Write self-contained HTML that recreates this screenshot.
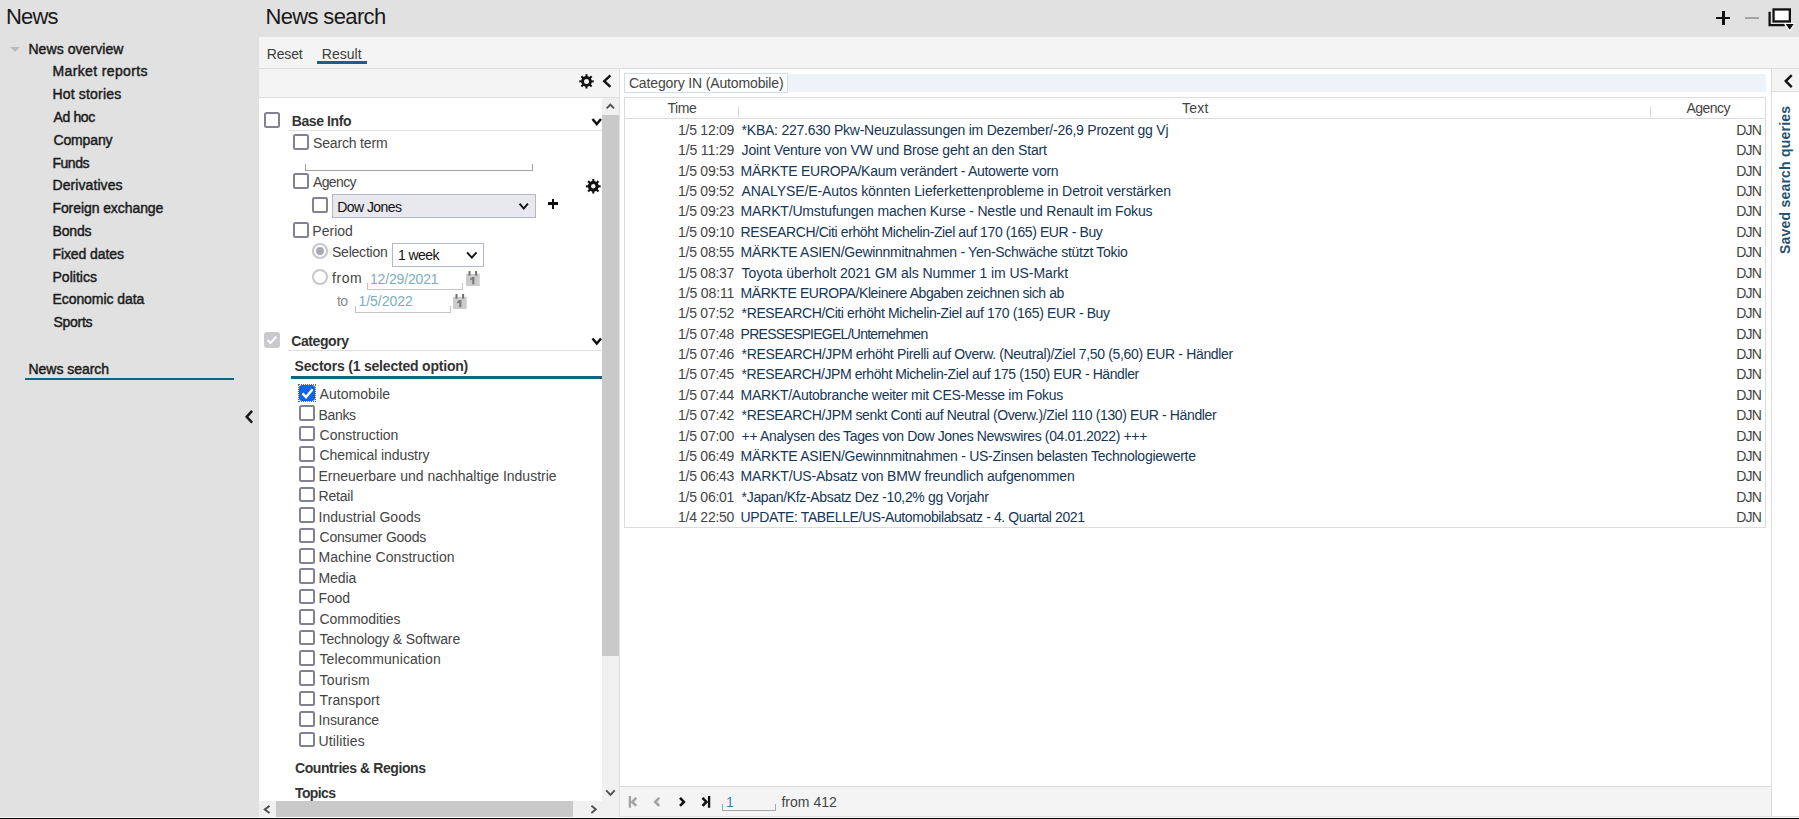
<!DOCTYPE html>
<html><head><meta charset="utf-8"><style>
html,body{margin:0;padding:0;width:1799px;height:819px;overflow:hidden;background:#e1e1e1}
body{position:relative;font-family:"Liberation Sans", sans-serif}
.t{white-space:nowrap;line-height:0}
</style></head><body>
<div style="position:absolute;left:0px;top:0px;width:1799px;height:819px;background:#e1e1e1;"></div>
<div class="t" id="news" style="position:absolute;top:17.48px;font-size:22px;font-weight:400;color:#1a1a1a;letter-spacing:-0.800px;left:6.00px;">News</div>
<div style="position:absolute;left:9.9px;top:47px;width:0;height:0;border-left:5.6px solid transparent;border-right:5.6px solid transparent;border-top:5.8px solid #bcbcbc"></div>
<div class="t" id="nov" style="position:absolute;top:49.15px;font-size:14px;font-weight:400;color:#1c1c1c;letter-spacing:0.064px;left:28.45px;-webkit-text-stroke:0.45px #1c1c1c;">News overview</div>
<div class="t" id="side0" style="position:absolute;top:71.15px;font-size:14px;font-weight:400;color:#1c1c1c;letter-spacing:0.373px;left:52.45px;-webkit-text-stroke:0.45px #1c1c1c;">Market reports</div>
<div class="t" id="side1" style="position:absolute;top:94.35px;font-size:14px;font-weight:400;color:#1c1c1c;letter-spacing:0.179px;left:52.45px;-webkit-text-stroke:0.45px #1c1c1c;">Hot stories</div>
<div class="t" id="side2" style="position:absolute;top:116.75px;font-size:14px;font-weight:400;color:#1c1c1c;letter-spacing:-0.357px;left:53.45px;-webkit-text-stroke:0.45px #1c1c1c;">Ad hoc</div>
<div class="t" id="side3" style="position:absolute;top:139.95px;font-size:14px;font-weight:400;color:#1c1c1c;letter-spacing:-0.136px;left:53.45px;-webkit-text-stroke:0.45px #1c1c1c;">Company</div>
<div class="t" id="side4" style="position:absolute;top:163.05px;font-size:14px;font-weight:400;color:#1c1c1c;letter-spacing:-0.453px;left:52.45px;-webkit-text-stroke:0.45px #1c1c1c;">Funds</div>
<div class="t" id="side5" style="position:absolute;top:185.05px;font-size:14px;font-weight:400;color:#1c1c1c;letter-spacing:0.086px;left:52.45px;-webkit-text-stroke:0.45px #1c1c1c;">Derivatives</div>
<div class="t" id="side6" style="position:absolute;top:208.05px;font-size:14px;font-weight:400;color:#1c1c1c;letter-spacing:-0.079px;left:52.45px;-webkit-text-stroke:0.45px #1c1c1c;">Foreign exchange</div>
<div class="t" id="side7" style="position:absolute;top:231.25px;font-size:14px;font-weight:400;color:#1c1c1c;letter-spacing:-0.149px;left:52.45px;-webkit-text-stroke:0.45px #1c1c1c;">Bonds</div>
<div class="t" id="side8" style="position:absolute;top:254.05px;font-size:14px;font-weight:400;color:#1c1c1c;letter-spacing:-0.077px;left:52.45px;-webkit-text-stroke:0.45px #1c1c1c;">Fixed dates</div>
<div class="t" id="side9" style="position:absolute;top:277.25px;font-size:14px;font-weight:400;color:#1c1c1c;letter-spacing:0.036px;left:52.45px;-webkit-text-stroke:0.45px #1c1c1c;">Politics</div>
<div class="t" id="side10" style="position:absolute;top:299.05px;font-size:14px;font-weight:400;color:#1c1c1c;letter-spacing:-0.060px;left:52.45px;-webkit-text-stroke:0.45px #1c1c1c;">Economic data</div>
<div class="t" id="side11" style="position:absolute;top:322.25px;font-size:14px;font-weight:400;color:#1c1c1c;letter-spacing:-0.272px;left:53.45px;-webkit-text-stroke:0.45px #1c1c1c;">Sports</div>
<div class="t" id="sns" style="position:absolute;top:369.45px;font-size:14px;font-weight:400;color:#1c1c1c;letter-spacing:-0.023px;left:28.45px;-webkit-text-stroke:0.45px #1c1c1c;">News search</div>
<div style="position:absolute;left:25px;top:378px;width:209px;height:2.2px;background:#0e6684;"></div>
<svg style="position:absolute;left:0;top:0;overflow:visible" width="1" height="1"><polyline points="252.1,410.9 246.70000000000002,416.8 252.1,422.70000000000005" fill="none" stroke="#1a1a1a" stroke-width="2.5" stroke-linecap="butt" stroke-linejoin="miter"/></svg>
<div class="t" id="hns" style="position:absolute;top:16.98px;font-size:22px;font-weight:400;color:#1a1a1a;letter-spacing:-0.632px;left:265.40px;">News search</div>
<div style="position:absolute;left:1716.2px;top:16.6px;width:14.3px;height:2.6px;background:#111;"></div>
<div style="position:absolute;left:1722.1px;top:11px;width:2.6px;height:13.8px;background:#111;"></div>
<div style="position:absolute;left:1745px;top:16.9px;width:14.2px;height:2.2px;background:#a3a3a3;"></div>
<svg style="position:absolute;left:1766px;top:6px" width="33" height="28"><path d="M3.6,5.8 V19.15 H18.8" fill="none" stroke="#111" stroke-width="2.3"/><rect x="7.55" y="3.45" width="16.3" height="12.0" fill="#fff" stroke="#111" stroke-width="2.3"/><path d="M18.6,17.5 L28.8,17.5 L23.7,24.8 Z" fill="#111" stroke="#fff" stroke-width="1.2" stroke-linejoin="round"/></svg>
<div style="position:absolute;left:259px;top:37px;width:1540px;height:31px;background:#f4f4f4;"></div>
<div style="position:absolute;left:259px;top:68px;width:1540px;height:1px;background:#dcdcdc;"></div>
<div class="t" id="reset" style="position:absolute;top:54.05px;font-size:14px;font-weight:400;color:#3d3d3d;letter-spacing:-0.171px;left:266.80px;">Reset</div>
<div class="t" id="result" style="position:absolute;top:54.05px;font-size:14px;font-weight:400;color:#3d3d3d;letter-spacing:0.021px;left:321.80px;">Result</div>
<div style="position:absolute;left:317px;top:61px;width:50px;height:3px;background:#0e6684;"></div>
<div style="position:absolute;left:259px;top:69px;width:360px;height:28px;background:#f4f4f4;"></div>
<div style="position:absolute;left:259px;top:97px;width:360px;height:1px;background:#dedede;"></div>
<div style="position:absolute;left:259px;top:98px;width:343.3px;height:703px;background:#ffffff;"></div>
<svg style="position:absolute;left:0;top:0;overflow:visible" width="1" height="1"><path d="M591.61,80.43 L593.72,80.30 L593.72,82.50 L591.61,82.37 L590.80,84.32 L592.38,85.73 L590.83,87.28 L589.42,85.70 L587.47,86.51 L587.60,88.62 L585.40,88.62 L585.53,86.51 L583.58,85.70 L582.17,87.28 L580.62,85.73 L582.20,84.32 L581.39,82.37 L579.28,82.50 L579.28,80.30 L581.39,80.43 L582.20,78.48 L580.62,77.07 L582.17,75.52 L583.58,77.10 L585.53,76.29 L585.40,74.18 L587.60,74.18 L587.47,76.29 L589.42,77.10 L590.83,75.52 L592.38,77.07 L590.80,78.48 Z" fill="#111"/><circle cx="586.5" cy="81.4" r="5.2" fill="#111"/><circle cx="586.5" cy="81.4" r="2.5" fill="#f4f4f4"/></svg>
<svg style="position:absolute;left:0;top:0;overflow:visible" width="1" height="1"><polyline points="610.418,75.382 604.264,81.15 610.418,86.91799999999999" fill="none" stroke="#111" stroke-width="2.45" stroke-linecap="butt" stroke-linejoin="miter"/></svg>
<div style="position:absolute;left:602.3px;top:98px;width:16.7px;height:703px;background:#f0f0f0;"></div>
<div style="position:absolute;left:602.3px;top:115px;width:16.7px;height:541px;background:#c9c9c9;"></div>
<svg style="position:absolute;left:0;top:0;overflow:visible" width="1" height="1"><polyline points="606.684,108.316 610.35,104.568 614.0160000000001,108.316" fill="none" stroke="#505050" stroke-width="1.9" stroke-linecap="butt" stroke-linejoin="miter"/></svg>
<svg style="position:absolute;left:0;top:0;overflow:visible" width="1" height="1"><polyline points="606.184,790.384 610.45,794.832 614.716,790.384" fill="none" stroke="#505050" stroke-width="1.9" stroke-linecap="butt" stroke-linejoin="miter"/></svg>
<div style="position:absolute;left:259px;top:801px;width:343.3px;height:16px;background:#f0f0f0;"></div>
<div style="position:absolute;left:276px;top:801px;width:297px;height:16px;background:#c9c9c9;"></div>
<svg style="position:absolute;left:0;top:0;overflow:visible" width="1" height="1"><polyline points="269.51599999999996,805.884 264.768,809.4000000000001 269.51599999999996,812.916" fill="none" stroke="#505050" stroke-width="1.9" stroke-linecap="butt" stroke-linejoin="miter"/></svg>
<svg style="position:absolute;left:0;top:0;overflow:visible" width="1" height="1"><polyline points="591.384,805.684 595.832,809.35 591.384,813.0160000000001" fill="none" stroke="#505050" stroke-width="1.9" stroke-linecap="butt" stroke-linejoin="miter"/></svg>
<div style="position:absolute;left:602.3px;top:801px;width:16.7px;height:16px;background:#f0f0f0;"></div>
<div style="position:absolute;left:619px;top:68px;width:1px;height:749px;background:#e0e0e0;"></div>
<div style="position:absolute;left:0px;top:817px;width:1799px;height:1px;background:#fcfcfc;"></div>
<div style="position:absolute;left:0px;top:818px;width:1799px;height:1px;background:#050505;"></div>
<div style="position:absolute;left:264.1px;top:112.1px;width:15.6px;height:15.6px;background:#fff;border:2px solid #828194;border-radius:2.5px;box-sizing:border-box;"></div>
<div class="t" id="base" style="position:absolute;top:121.45px;font-size:14px;font-weight:700;color:#333;letter-spacing:-0.395px;left:291.70px;">Base Info</div>
<div style="position:absolute;left:288px;top:130px;width:314px;height:1px;background:#e0e0e0;"></div>
<svg style="position:absolute;left:0;top:0;overflow:visible" width="1" height="1"><polyline points="592.5,119.0 596.75,124.0 601.0,119.0" fill="none" stroke="#111" stroke-width="2.5" stroke-linecap="butt" stroke-linejoin="miter"/></svg>
<div style="position:absolute;left:293.2px;top:134.1px;width:15.6px;height:15.6px;background:#fff;border:2px solid #828194;border-radius:2.5px;box-sizing:border-box;"></div>
<div class="t" id="sterm" style="position:absolute;top:143.05px;font-size:14px;font-weight:400;color:#444;letter-spacing:-0.169px;left:313.00px;">Search term</div>
<div style="position:absolute;left:305px;top:169.5px;width:227.5px;height:1px;background:#a2a2a2;"></div>
<div style="position:absolute;left:305px;top:164px;width:1px;height:6px;background:#a2a2a2;"></div>
<div style="position:absolute;left:531.5px;top:164px;width:1px;height:6px;background:#a2a2a2;"></div>
<div style="position:absolute;left:293.2px;top:173.2px;width:15.6px;height:15.6px;background:#fff;border:2px solid #828194;border-radius:2.5px;box-sizing:border-box;"></div>
<div class="t" id="agency" style="position:absolute;top:181.85px;font-size:14px;font-weight:400;color:#444;letter-spacing:-0.639px;left:313.00px;">Agency</div>
<div style="position:absolute;left:312.4px;top:197.2px;width:15.6px;height:15.6px;background:#fff;border:2px solid #828194;border-radius:2.5px;box-sizing:border-box;"></div>
<div style="position:absolute;left:332px;top:194px;width:204px;height:24px;background:#e8e8ee;border:1px solid #b3b7cc;box-sizing:border-box;"></div>
<div class="t" id="dj" style="position:absolute;top:206.65px;font-size:14px;font-weight:400;color:#111;letter-spacing:-0.569px;left:337.30px;">Dow Jones</div>
<svg style="position:absolute;left:0;top:0;overflow:visible" width="1" height="1"><polyline points="519.584,203.684 523.75,208.632 527.916,203.684" fill="none" stroke="#111" stroke-width="1.9" stroke-linecap="butt" stroke-linejoin="miter"/></svg>
<div style="position:absolute;left:548.2px;top:202.4px;width:9.7px;height:2.7px;background:#111;"></div>
<div style="position:absolute;left:551.55px;top:198.8px;width:2.7px;height:9.9px;background:#111;"></div>
<svg style="position:absolute;left:0;top:0;overflow:visible" width="1" height="1"><path d="M598.51,185.31 L600.62,185.19 L600.62,187.41 L598.51,187.29 L597.68,189.28 L599.26,190.69 L597.69,192.26 L596.28,190.68 L594.29,191.51 L594.41,193.62 L592.19,193.62 L592.31,191.51 L590.32,190.68 L588.91,192.26 L587.34,190.69 L588.92,189.28 L588.09,187.29 L585.98,187.41 L585.98,185.19 L588.09,185.31 L588.92,183.32 L587.34,181.91 L588.91,180.34 L590.32,181.92 L592.31,181.09 L592.19,178.98 L594.41,178.98 L594.29,181.09 L596.28,181.92 L597.69,180.34 L599.26,181.91 L597.68,183.32 Z" fill="#111"/><circle cx="593.3" cy="186.3" r="5.3" fill="#111"/><circle cx="593.3" cy="186.3" r="2.2" fill="#f4f4f4"/></svg>
<div style="position:absolute;left:602.3px;top:175px;width:16.7px;height:20px;background:#c9c9c9;"></div>
<div style="position:absolute;left:293.3px;top:222.4px;width:15.6px;height:15.6px;background:#fff;border:2px solid #828194;border-radius:2.5px;box-sizing:border-box;"></div>
<div class="t" id="period" style="position:absolute;top:231.25px;font-size:14px;font-weight:400;color:#444;letter-spacing:0.023px;left:312.30px;">Period</div>
<div style="position:absolute;left:312.1px;top:243.1px;width:15.8px;height:15.6px;background:#fff;border:2px solid #c6c6cd;border-radius:50%;box-sizing:border-box;"></div>
<div style="position:absolute;left:316px;top:247px;width:8px;height:8px;background:#a9a9b6;border-radius:50%;"></div>
<div class="t" id="sel" style="position:absolute;top:252.35px;font-size:14px;font-weight:400;color:#444;letter-spacing:-0.226px;left:332.00px;">Selection</div>
<div style="position:absolute;left:392px;top:243px;width:92px;height:24px;background:#fff;border:1px solid #b3b7cc;box-sizing:border-box;"></div>
<div class="t" id="week" style="position:absolute;top:255.45px;font-size:14px;font-weight:400;color:#111;letter-spacing:-0.572px;left:397.90px;">1 week</div>
<svg style="position:absolute;left:0;top:0;overflow:visible" width="1" height="1"><polyline points="467.084,252.384 471.79999999999995,257.632 476.51599999999996,252.384" fill="none" stroke="#111" stroke-width="1.9" stroke-linecap="butt" stroke-linejoin="miter"/></svg>
<div style="position:absolute;left:312.1px;top:269.1px;width:15.8px;height:15.8px;background:#fff;border:2px solid #c6c6cd;border-radius:50%;box-sizing:border-box;"></div>
<div class="t" id="from" style="position:absolute;top:277.85px;font-size:14px;font-weight:400;color:#444;letter-spacing:0.554px;left:332.00px;">from</div>
<div class="t" id="d1" style="position:absolute;top:279.35px;font-size:14px;font-weight:400;color:#7aaec2;letter-spacing:-0.154px;left:369.90px;">12/29/2021</div>
<div style="position:absolute;left:367px;top:289px;width:96px;height:1px;background:#c4c4c4;"></div>
<div style="position:absolute;left:367px;top:283px;width:1px;height:7px;background:#c4c4c4;"></div>
<div style="position:absolute;left:462px;top:283px;width:1px;height:7px;background:#c4c4c4;"></div>
<div class="t" id="to" style="position:absolute;top:301.05px;font-size:14px;font-weight:400;color:#8a8a8a;letter-spacing:-0.490px;left:336.90px;">to</div>
<div class="t" id="d2" style="position:absolute;top:301.15px;font-size:14px;font-weight:400;color:#7aaec2;letter-spacing:-0.016px;left:358.40px;">1/5/2022</div>
<div style="position:absolute;left:355px;top:312px;width:96px;height:1px;background:#c4c4c4;"></div>
<div style="position:absolute;left:355px;top:306px;width:1px;height:7px;background:#c4c4c4;"></div>
<div style="position:absolute;left:450px;top:306px;width:1px;height:7px;background:#c4c4c4;"></div>
<svg style="position:absolute;left:465.6px;top:271.1px" width="15" height="16"><rect x="0" y="2.8" width="13.7" height="12.2" fill="#cbcbcb"/><rect x="2.5" y="0" width="2" height="4.6" fill="#707070"/><rect x="9.1" y="0" width="2" height="4.6" fill="#707070"/><path d="M6.2,6 H8.4 V13.2 H6.2 V8.6 L4.3,9.6 V7.6 Z" fill="#7a7a7a"/></svg>
<svg style="position:absolute;left:453.4px;top:294.3px" width="15" height="16"><rect x="0" y="2.8" width="13.7" height="12.2" fill="#cbcbcb"/><rect x="2.5" y="0" width="2" height="4.6" fill="#707070"/><rect x="9.1" y="0" width="2" height="4.6" fill="#707070"/><path d="M6.2,6 H8.4 V13.2 H6.2 V8.6 L4.3,9.6 V7.6 Z" fill="#7a7a7a"/></svg>
<div style="position:absolute;left:264.1px;top:332.2px;width:15.6px;height:15.6px;background:#c9c9ce;border-radius:3px;"></div>
<svg style="position:absolute;left:264.1px;top:332.2px" width="15.6" height="15.6"><polyline points="3.5,8 6.5,11 12.3,4.8" fill="none" stroke="#fff" stroke-width="2"/></svg>
<div class="t" id="cat" style="position:absolute;top:341.05px;font-size:14px;font-weight:700;color:#333;letter-spacing:-0.399px;left:291.20px;">Category</div>
<div style="position:absolute;left:288px;top:350px;width:314px;height:1px;background:#e0e0e0;"></div>
<svg style="position:absolute;left:0;top:0;overflow:visible" width="1" height="1"><polyline points="592.5,338.5 596.75,343.5 601.0,338.5" fill="none" stroke="#111" stroke-width="2.5" stroke-linecap="butt" stroke-linejoin="miter"/></svg>
<div class="t" id="sect" style="position:absolute;top:365.75px;font-size:14px;font-weight:700;color:#333;letter-spacing:-0.203px;left:294.60px;">Sectors (1 selected option)</div>
<div style="position:absolute;left:291px;top:376px;width:311.3px;height:3px;background:#0e6684;"></div>
<div style="position:absolute;left:298.6px;top:384.70000000000005px;width:16.5px;height:16.5px;background:#1064e3;border-radius:3px;"></div>
<div style="position:absolute;left:298.0px;top:384.1px;width:17.7px;height:17.7px;background:transparent;border:1px dotted #333;box-sizing:border-box;opacity:0.75"></div>
<svg style="position:absolute;left:298.6px;top:384.70000000000005px" width="17" height="17"><polyline points="3.4,8.3 7.1,12.1 13.6,4.3" fill="none" stroke="#fff" stroke-width="2.4"/></svg>
<div class="t" id="sec0" style="position:absolute;top:394.25px;font-size:14px;font-weight:400;color:#444;letter-spacing:0.061px;left:319.50px;">Automobile</div>
<div style="position:absolute;left:299.3px;top:405.29px;width:15.6px;height:15.6px;background:#fff;border:2px solid #828194;border-radius:2.5px;box-sizing:border-box;"></div>
<div class="t" id="sec1" style="position:absolute;top:414.64px;font-size:14px;font-weight:400;color:#444;letter-spacing:-0.328px;left:318.50px;">Banks</div>
<div style="position:absolute;left:299.3px;top:425.68000000000006px;width:15.6px;height:15.6px;background:#fff;border:2px solid #828194;border-radius:2.5px;box-sizing:border-box;"></div>
<div class="t" id="sec2" style="position:absolute;top:435.03px;font-size:14px;font-weight:400;color:#444;letter-spacing:0.027px;left:319.50px;">Construction</div>
<div style="position:absolute;left:299.3px;top:446.07000000000005px;width:15.6px;height:15.6px;background:#fff;border:2px solid #828194;border-radius:2.5px;box-sizing:border-box;"></div>
<div class="t" id="sec3" style="position:absolute;top:455.42px;font-size:14px;font-weight:400;color:#444;letter-spacing:-0.079px;left:319.50px;">Chemical industry</div>
<div style="position:absolute;left:299.3px;top:466.46000000000004px;width:15.6px;height:15.6px;background:#fff;border:2px solid #828194;border-radius:2.5px;box-sizing:border-box;"></div>
<div class="t" id="sec4" style="position:absolute;top:475.81px;font-size:14px;font-weight:400;color:#444;letter-spacing:-0.002px;left:318.50px;">Erneuerbare und nachhaltige Industrie</div>
<div style="position:absolute;left:299.3px;top:486.85px;width:15.6px;height:15.6px;background:#fff;border:2px solid #828194;border-radius:2.5px;box-sizing:border-box;"></div>
<div class="t" id="sec5" style="position:absolute;top:496.20px;font-size:14px;font-weight:400;color:#444;letter-spacing:-0.197px;left:318.50px;">Retail</div>
<div style="position:absolute;left:299.3px;top:507.24px;width:15.6px;height:15.6px;background:#fff;border:2px solid #828194;border-radius:2.5px;box-sizing:border-box;"></div>
<div class="t" id="sec6" style="position:absolute;top:516.59px;font-size:14px;font-weight:400;color:#444;letter-spacing:0.024px;left:318.50px;">Industrial Goods</div>
<div style="position:absolute;left:299.3px;top:527.63px;width:15.6px;height:15.6px;background:#fff;border:2px solid #828194;border-radius:2.5px;box-sizing:border-box;"></div>
<div class="t" id="sec7" style="position:absolute;top:536.98px;font-size:14px;font-weight:400;color:#444;letter-spacing:-0.232px;left:319.50px;">Consumer Goods</div>
<div style="position:absolute;left:299.3px;top:548.0200000000001px;width:15.6px;height:15.6px;background:#fff;border:2px solid #828194;border-radius:2.5px;box-sizing:border-box;"></div>
<div class="t" id="sec8" style="position:absolute;top:557.37px;font-size:14px;font-weight:400;color:#444;letter-spacing:0.036px;left:318.50px;">Machine Construction</div>
<div style="position:absolute;left:299.3px;top:568.41px;width:15.6px;height:15.6px;background:#fff;border:2px solid #828194;border-radius:2.5px;box-sizing:border-box;"></div>
<div class="t" id="sec9" style="position:absolute;top:577.76px;font-size:14px;font-weight:400;color:#444;letter-spacing:-0.061px;left:318.50px;">Media</div>
<div style="position:absolute;left:299.3px;top:588.8000000000001px;width:15.6px;height:15.6px;background:#fff;border:2px solid #828194;border-radius:2.5px;box-sizing:border-box;"></div>
<div class="t" id="sec10" style="position:absolute;top:598.15px;font-size:14px;font-weight:400;color:#444;letter-spacing:-0.108px;left:318.50px;">Food</div>
<div style="position:absolute;left:299.3px;top:609.19px;width:15.6px;height:15.6px;background:#fff;border:2px solid #828194;border-radius:2.5px;box-sizing:border-box;"></div>
<div class="t" id="sec11" style="position:absolute;top:618.54px;font-size:14px;font-weight:400;color:#444;letter-spacing:-0.059px;left:319.50px;">Commodities</div>
<div style="position:absolute;left:299.3px;top:629.58px;width:15.6px;height:15.6px;background:#fff;border:2px solid #828194;border-radius:2.5px;box-sizing:border-box;"></div>
<div class="t" id="sec12" style="position:absolute;top:638.93px;font-size:14px;font-weight:400;color:#444;letter-spacing:-0.125px;left:319.50px;">Technology &amp; Software</div>
<div style="position:absolute;left:299.3px;top:649.97px;width:15.6px;height:15.6px;background:#fff;border:2px solid #828194;border-radius:2.5px;box-sizing:border-box;"></div>
<div class="t" id="sec13" style="position:absolute;top:659.32px;font-size:14px;font-weight:400;color:#444;letter-spacing:0.085px;left:319.50px;">Telecommunication</div>
<div style="position:absolute;left:299.3px;top:670.36px;width:15.6px;height:15.6px;background:#fff;border:2px solid #828194;border-radius:2.5px;box-sizing:border-box;"></div>
<div class="t" id="sec14" style="position:absolute;top:679.71px;font-size:14px;font-weight:400;color:#444;letter-spacing:0.209px;left:319.50px;">Tourism</div>
<div style="position:absolute;left:299.3px;top:690.7500000000001px;width:15.6px;height:15.6px;background:#fff;border:2px solid #828194;border-radius:2.5px;box-sizing:border-box;"></div>
<div class="t" id="sec15" style="position:absolute;top:700.10px;font-size:14px;font-weight:400;color:#444;letter-spacing:0.100px;left:319.50px;">Transport</div>
<div style="position:absolute;left:299.3px;top:711.14px;width:15.6px;height:15.6px;background:#fff;border:2px solid #828194;border-radius:2.5px;box-sizing:border-box;"></div>
<div class="t" id="sec16" style="position:absolute;top:720.49px;font-size:14px;font-weight:400;color:#444;letter-spacing:-0.112px;left:318.50px;">Insurance</div>
<div style="position:absolute;left:299.3px;top:731.5300000000001px;width:15.6px;height:15.6px;background:#fff;border:2px solid #828194;border-radius:2.5px;box-sizing:border-box;"></div>
<div class="t" id="sec17" style="position:absolute;top:740.88px;font-size:14px;font-weight:400;color:#444;letter-spacing:0.135px;left:318.50px;">Utilities</div>
<div class="t" id="cr" style="position:absolute;top:768.15px;font-size:14px;font-weight:700;color:#333;letter-spacing:-0.415px;left:295.00px;">Countries &amp; Regions</div>
<div class="t" id="topics" style="position:absolute;top:793.35px;font-size:14px;font-weight:700;color:#333;letter-spacing:-0.598px;left:295.00px;">Topics</div>
<div style="position:absolute;left:620px;top:69px;width:1151px;height:717px;background:#ffffff;"></div>
<div style="position:absolute;left:788px;top:74.2px;width:978px;height:17.6px;background:#eef2f9;"></div>
<div style="position:absolute;left:624.2px;top:73.2px;width:163.6px;height:19.5px;background:#fff;border:1px solid #cfdcf1;box-sizing:border-box;"></div>
<div class="t" id="filt" style="position:absolute;top:83.15px;font-size:14px;font-weight:400;color:#444;letter-spacing:-0.143px;left:628.90px;">Category IN (Automobile)</div>
<div style="position:absolute;left:624px;top:97px;width:1142px;height:431px;background:#fff;border:1px solid #dcdcdc;box-sizing:border-box;"></div>
<div style="position:absolute;left:624px;top:118px;width:1142px;height:1px;background:#dcdcdc;"></div>
<div style="position:absolute;left:738px;top:106px;width:1px;height:12px;background:#dcdcdc;"></div>
<div style="position:absolute;left:1650px;top:106px;width:1px;height:12px;background:#dcdcdc;"></div>
<div class="t" id="hTime" style="position:absolute;top:108.35px;font-size:14px;font-weight:400;color:#444;letter-spacing:-0.468px;left:667.50px;">Time</div>
<div class="t" id="hText" style="position:absolute;top:108.35px;font-size:14px;font-weight:400;color:#444;letter-spacing:0.171px;left:1182.10px;">Text</div>
<div class="t" id="hAg" style="position:absolute;top:108.35px;font-size:14px;font-weight:400;color:#444;letter-spacing:-0.539px;left:1686.40px;">Agency</div>
<div class="t" id="tm0" style="position:absolute;top:129.95px;font-size:14px;font-weight:400;color:#444;letter-spacing:-0.250px;right:1064.86px;">1/5 12:09</div>
<div class="t" id="tx0" style="position:absolute;top:129.95px;font-size:14px;font-weight:400;color:#143657;letter-spacing:-0.240px;left:741.60px;">*KBA: 227.630 Pkw-Neuzulassungen im Dezember/-26,9 Prozent gg Vj</div>
<div class="t" id="dj0" style="position:absolute;top:129.95px;font-size:14px;font-weight:400;color:#444;letter-spacing:-0.800px;right:37.89px;">DJN</div>
<div class="t" id="tm1" style="position:absolute;top:150.32px;font-size:14px;font-weight:400;color:#444;letter-spacing:-0.120px;right:1064.73px;">1/5 11:29</div>
<div class="t" id="tx1" style="position:absolute;top:150.32px;font-size:14px;font-weight:400;color:#143657;letter-spacing:-0.178px;left:741.60px;">Joint Venture von VW und Brose geht an den Start</div>
<div class="t" id="dj1" style="position:absolute;top:150.32px;font-size:14px;font-weight:400;color:#444;letter-spacing:-0.800px;right:37.89px;">DJN</div>
<div class="t" id="tm2" style="position:absolute;top:170.69px;font-size:14px;font-weight:400;color:#444;letter-spacing:-0.250px;right:1064.86px;">1/5 09:53</div>
<div class="t" id="tx2" style="position:absolute;top:170.69px;font-size:14px;font-weight:400;color:#143657;letter-spacing:-0.264px;left:740.60px;">MÄRKTE EUROPA/Kaum verändert - Autowerte vorn</div>
<div class="t" id="dj2" style="position:absolute;top:170.69px;font-size:14px;font-weight:400;color:#444;letter-spacing:-0.800px;right:37.89px;">DJN</div>
<div class="t" id="tm3" style="position:absolute;top:191.06px;font-size:14px;font-weight:400;color:#444;letter-spacing:-0.250px;right:1064.86px;">1/5 09:52</div>
<div class="t" id="tx3" style="position:absolute;top:191.06px;font-size:14px;font-weight:400;color:#143657;letter-spacing:-0.094px;left:741.60px;">ANALYSE/E-Autos könnten Lieferkettenprobleme in Detroit verstärken</div>
<div class="t" id="dj3" style="position:absolute;top:191.06px;font-size:14px;font-weight:400;color:#444;letter-spacing:-0.800px;right:37.89px;">DJN</div>
<div class="t" id="tm4" style="position:absolute;top:211.43px;font-size:14px;font-weight:400;color:#444;letter-spacing:-0.250px;right:1064.86px;">1/5 09:23</div>
<div class="t" id="tx4" style="position:absolute;top:211.43px;font-size:14px;font-weight:400;color:#143657;letter-spacing:-0.180px;left:740.60px;">MARKT/Umstufungen machen Kurse - Nestle und Renault im Fokus</div>
<div class="t" id="dj4" style="position:absolute;top:211.43px;font-size:14px;font-weight:400;color:#444;letter-spacing:-0.800px;right:37.89px;">DJN</div>
<div class="t" id="tm5" style="position:absolute;top:231.80px;font-size:14px;font-weight:400;color:#444;letter-spacing:-0.250px;right:1064.86px;">1/5 09:10</div>
<div class="t" id="tx5" style="position:absolute;top:231.80px;font-size:14px;font-weight:400;color:#143657;letter-spacing:-0.402px;left:740.60px;">RESEARCH/Citi erhöht Michelin-Ziel auf 170 (165) EUR - Buy</div>
<div class="t" id="dj5" style="position:absolute;top:231.80px;font-size:14px;font-weight:400;color:#444;letter-spacing:-0.800px;right:37.89px;">DJN</div>
<div class="t" id="tm6" style="position:absolute;top:252.17px;font-size:14px;font-weight:400;color:#444;letter-spacing:-0.250px;right:1064.86px;">1/5 08:55</div>
<div class="t" id="tx6" style="position:absolute;top:252.17px;font-size:14px;font-weight:400;color:#143657;letter-spacing:-0.282px;left:740.60px;">MÄRKTE ASIEN/Gewinnmitnahmen - Yen-Schwäche stützt Tokio</div>
<div class="t" id="dj6" style="position:absolute;top:252.17px;font-size:14px;font-weight:400;color:#444;letter-spacing:-0.800px;right:37.89px;">DJN</div>
<div class="t" id="tm7" style="position:absolute;top:272.54px;font-size:14px;font-weight:400;color:#444;letter-spacing:-0.250px;right:1064.86px;">1/5 08:37</div>
<div class="t" id="tx7" style="position:absolute;top:272.54px;font-size:14px;font-weight:400;color:#143657;letter-spacing:-0.072px;left:741.60px;">Toyota überholt 2021 GM als Nummer 1 im US-Markt</div>
<div class="t" id="dj7" style="position:absolute;top:272.54px;font-size:14px;font-weight:400;color:#444;letter-spacing:-0.800px;right:37.89px;">DJN</div>
<div class="t" id="tm8" style="position:absolute;top:292.91px;font-size:14px;font-weight:400;color:#444;letter-spacing:-0.120px;right:1064.73px;">1/5 08:11</div>
<div class="t" id="tx8" style="position:absolute;top:292.91px;font-size:14px;font-weight:400;color:#143657;letter-spacing:-0.417px;left:740.60px;">MÄRKTE EUROPA/Kleinere Abgaben zeichnen sich ab</div>
<div class="t" id="dj8" style="position:absolute;top:292.91px;font-size:14px;font-weight:400;color:#444;letter-spacing:-0.800px;right:37.89px;">DJN</div>
<div class="t" id="tm9" style="position:absolute;top:313.28px;font-size:14px;font-weight:400;color:#444;letter-spacing:-0.250px;right:1064.86px;">1/5 07:52</div>
<div class="t" id="tx9" style="position:absolute;top:313.28px;font-size:14px;font-weight:400;color:#143657;letter-spacing:-0.382px;left:741.60px;">*RESEARCH/Citi erhöht Michelin-Ziel auf 170 (165) EUR - Buy</div>
<div class="t" id="dj9" style="position:absolute;top:313.28px;font-size:14px;font-weight:400;color:#444;letter-spacing:-0.800px;right:37.89px;">DJN</div>
<div class="t" id="tm10" style="position:absolute;top:333.65px;font-size:14px;font-weight:400;color:#444;letter-spacing:-0.250px;right:1064.86px;">1/5 07:48</div>
<div class="t" id="tx10" style="position:absolute;top:333.65px;font-size:14px;font-weight:400;color:#143657;letter-spacing:-0.744px;left:740.60px;">PRESSESPIEGEL/Unternehmen</div>
<div class="t" id="dj10" style="position:absolute;top:333.65px;font-size:14px;font-weight:400;color:#444;letter-spacing:-0.800px;right:37.89px;">DJN</div>
<div class="t" id="tm11" style="position:absolute;top:354.02px;font-size:14px;font-weight:400;color:#444;letter-spacing:-0.250px;right:1064.86px;">1/5 07:46</div>
<div class="t" id="tx11" style="position:absolute;top:354.02px;font-size:14px;font-weight:400;color:#143657;letter-spacing:-0.347px;left:741.60px;">*RESEARCH/JPM erhöht Pirelli auf Overw. (Neutral)/Ziel 7,50 (5,60) EUR - Händler</div>
<div class="t" id="dj11" style="position:absolute;top:354.02px;font-size:14px;font-weight:400;color:#444;letter-spacing:-0.800px;right:37.89px;">DJN</div>
<div class="t" id="tm12" style="position:absolute;top:374.39px;font-size:14px;font-weight:400;color:#444;letter-spacing:-0.250px;right:1064.86px;">1/5 07:45</div>
<div class="t" id="tx12" style="position:absolute;top:374.39px;font-size:14px;font-weight:400;color:#143657;letter-spacing:-0.421px;left:741.60px;">*RESEARCH/JPM erhöht Michelin-Ziel auf 175 (150) EUR - Händler</div>
<div class="t" id="dj12" style="position:absolute;top:374.39px;font-size:14px;font-weight:400;color:#444;letter-spacing:-0.800px;right:37.89px;">DJN</div>
<div class="t" id="tm13" style="position:absolute;top:394.76px;font-size:14px;font-weight:400;color:#444;letter-spacing:-0.250px;right:1064.86px;">1/5 07:44</div>
<div class="t" id="tx13" style="position:absolute;top:394.76px;font-size:14px;font-weight:400;color:#143657;letter-spacing:-0.276px;left:740.60px;">MARKT/Autobranche weiter mit CES-Messe im Fokus</div>
<div class="t" id="dj13" style="position:absolute;top:394.76px;font-size:14px;font-weight:400;color:#444;letter-spacing:-0.800px;right:37.89px;">DJN</div>
<div class="t" id="tm14" style="position:absolute;top:415.13px;font-size:14px;font-weight:400;color:#444;letter-spacing:-0.250px;right:1064.86px;">1/5 07:42</div>
<div class="t" id="tx14" style="position:absolute;top:415.13px;font-size:14px;font-weight:400;color:#143657;letter-spacing:-0.369px;left:741.60px;">*RESEARCH/JPM senkt Conti auf Neutral (Overw.)/Ziel 110 (130) EUR - Händler</div>
<div class="t" id="dj14" style="position:absolute;top:415.13px;font-size:14px;font-weight:400;color:#444;letter-spacing:-0.800px;right:37.89px;">DJN</div>
<div class="t" id="tm15" style="position:absolute;top:435.50px;font-size:14px;font-weight:400;color:#444;letter-spacing:-0.250px;right:1064.86px;">1/5 07:00</div>
<div class="t" id="tx15" style="position:absolute;top:435.50px;font-size:14px;font-weight:400;color:#143657;letter-spacing:-0.355px;left:741.60px;">++ Analysen des Tages von Dow Jones Newswires (04.01.2022) +++</div>
<div class="t" id="dj15" style="position:absolute;top:435.50px;font-size:14px;font-weight:400;color:#444;letter-spacing:-0.800px;right:37.89px;">DJN</div>
<div class="t" id="tm16" style="position:absolute;top:455.87px;font-size:14px;font-weight:400;color:#444;letter-spacing:-0.250px;right:1064.86px;">1/5 06:49</div>
<div class="t" id="tx16" style="position:absolute;top:455.87px;font-size:14px;font-weight:400;color:#143657;letter-spacing:-0.256px;left:740.60px;">MÄRKTE ASIEN/Gewinnmitnahmen - US-Zinsen belasten Technologiewerte</div>
<div class="t" id="dj16" style="position:absolute;top:455.87px;font-size:14px;font-weight:400;color:#444;letter-spacing:-0.800px;right:37.89px;">DJN</div>
<div class="t" id="tm17" style="position:absolute;top:476.24px;font-size:14px;font-weight:400;color:#444;letter-spacing:-0.250px;right:1064.86px;">1/5 06:43</div>
<div class="t" id="tx17" style="position:absolute;top:476.24px;font-size:14px;font-weight:400;color:#143657;letter-spacing:-0.184px;left:740.60px;">MARKT/US-Absatz von BMW freundlich aufgenommen</div>
<div class="t" id="dj17" style="position:absolute;top:476.24px;font-size:14px;font-weight:400;color:#444;letter-spacing:-0.800px;right:37.89px;">DJN</div>
<div class="t" id="tm18" style="position:absolute;top:496.61px;font-size:14px;font-weight:400;color:#444;letter-spacing:-0.250px;right:1064.86px;">1/5 06:01</div>
<div class="t" id="tx18" style="position:absolute;top:496.61px;font-size:14px;font-weight:400;color:#143657;letter-spacing:-0.333px;left:741.60px;">*Japan/Kfz-Absatz Dez -10,2% gg Vorjahr</div>
<div class="t" id="dj18" style="position:absolute;top:496.61px;font-size:14px;font-weight:400;color:#444;letter-spacing:-0.800px;right:37.89px;">DJN</div>
<div class="t" id="tm19" style="position:absolute;top:516.98px;font-size:14px;font-weight:400;color:#444;letter-spacing:-0.250px;right:1064.86px;">1/4 22:50</div>
<div class="t" id="tx19" style="position:absolute;top:516.98px;font-size:14px;font-weight:400;color:#143657;letter-spacing:-0.387px;left:740.60px;">UPDATE: TABELLE/US-Automobilabsatz - 4. Quartal 2021</div>
<div class="t" id="dj19" style="position:absolute;top:516.98px;font-size:14px;font-weight:400;color:#444;letter-spacing:-0.800px;right:37.89px;">DJN</div>
<div style="position:absolute;left:620px;top:786px;width:1151px;height:1px;background:#dcdcdc;"></div>
<div style="position:absolute;left:620px;top:787px;width:1151px;height:29px;background:#f4f4f4;"></div>
<svg style="position:absolute;left:0;top:0;overflow:visible" width="1" height="1"><rect x="628.75" y="796" width="2.3" height="11.75" fill="#a3a3a3"/><polyline points="636.2,797.9 632.3,801.9 636.2,805.9" fill="none" stroke="#a3a3a3" stroke-width="2.6"/><polyline points="659.2,797.9 655.3,801.9 659.2,805.9" fill="none" stroke="#a3a3a3" stroke-width="2.6"/><polyline points="680,797.9 683.9,801.9 680,805.9" fill="none" stroke="#111" stroke-width="2.6"/><polyline points="702.5,797.9 706.4,801.9 702.5,805.9" fill="none" stroke="#111" stroke-width="2.6"/><rect x="707.9" y="796" width="2.35" height="11.75" fill="#111"/></svg>
<div style="position:absolute;left:722.3px;top:809.5px;width:53.4px;height:1px;background:#a8a8a8;"></div>
<div style="position:absolute;left:722.3px;top:804px;width:1px;height:6px;background:#a8a8a8;"></div>
<div style="position:absolute;left:774.7px;top:804px;width:1px;height:6px;background:#a8a8a8;"></div>
<div class="t" id="pg1" style="position:absolute;top:801.75px;font-size:14px;font-weight:400;color:#2a8abf;letter-spacing:0.000px;left:726.00px;">1</div>
<div class="t" id="from412" style="position:absolute;top:801.75px;font-size:14px;font-weight:400;color:#444;letter-spacing:0.020px;left:781.40px;">from 412</div>
<div style="position:absolute;left:1771px;top:68px;width:1px;height:749px;background:#dcdcdc;"></div>
<div style="position:absolute;left:1772px;top:69px;width:27px;height:22px;background:#f4f4f4;"></div>
<div style="position:absolute;left:1772px;top:91px;width:27px;height:1px;background:#dcdcdc;"></div>
<div style="position:absolute;left:1772px;top:92px;width:27px;height:724px;background:#fff;"></div>
<svg style="position:absolute;left:0;top:0;overflow:visible" width="1" height="1"><polyline points="1791.7179999999998,75.08200000000001 1785.764,81.05000000000001 1791.7179999999998,87.018" fill="none" stroke="#111" stroke-width="2.45" stroke-linecap="butt" stroke-linejoin="miter"/></svg>
<div class="t" id="saved" style="position:absolute;left:1785.0px;top:253.7px;transform-origin:0 0;transform:rotate(-90deg);font-size:14px;font-weight:700;color:#1f5270;white-space:nowrap;line-height:0;letter-spacing:0.217px">Saved search queries</div>
</body></html>
